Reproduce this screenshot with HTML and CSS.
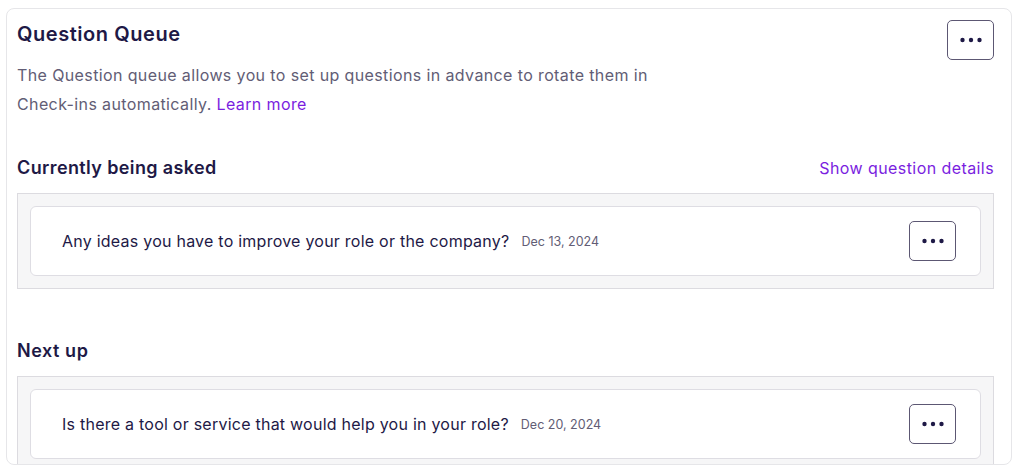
FILE: index.html
```html
<!DOCTYPE html>
<html lang="en">
<head>
<meta charset="utf-8">
<title>Question Queue</title>
<link rel="stylesheet" href="styles.css">
</head>
<body>
<div class="card">
  <div class="header">
    <h1 class="title">Question Queue</h1>
    <button class="more-btn" aria-label="More options">
      <svg width="22" height="6" viewBox="0 0 22 6"><circle cx="2.5" cy="3" r="2.2"/><circle cx="11" cy="3" r="2.2"/><circle cx="19.5" cy="3" r="2.2"/></svg>
    </button>
  </div>
  <p class="desc">The Question queue allows you to set up questions in advance to rotate them in<br>Check-ins automatically. <a class="link" href="#">Learn more</a></p>

  <div class="section-head first">
    <h2 class="section-title">Currently being asked</h2>
    <a class="link details" href="#">Show question details</a>
  </div>
  <div class="well">
    <div class="q-card">
      <span class="q-text">Any ideas you have to improve your role or the company?</span>
      <span class="q-date">Dec 13, 2024</span>
      <button class="more-btn" aria-label="More options">
        <svg width="22" height="6" viewBox="0 0 22 6"><circle cx="2.5" cy="3" r="2.2"/><circle cx="11" cy="3" r="2.2"/><circle cx="19.5" cy="3" r="2.2"/></svg>
      </button>
    </div>
  </div>

  <div class="section-head second">
    <h2 class="section-title short">Next up</h2>
  </div>
  <div class="well">
    <div class="q-card">
      <span class="q-text">Is there a tool or service that would help you in your role?</span>
      <span class="q-date">Dec 20, 2024</span>
      <button class="more-btn" aria-label="More options">
        <svg width="22" height="6" viewBox="0 0 22 6"><circle cx="2.5" cy="3" r="2.2"/><circle cx="11" cy="3" r="2.2"/><circle cx="19.5" cy="3" r="2.2"/></svg>
      </button>
    </div>
  </div>
</div>
</body>
</html>
```

FILE: styles.css
```css
* { box-sizing: border-box; }
html, body { margin: 0; padding: 0; background: #ffffff; }
body {
  font-family: "Inter", "Noto Sans", sans-serif;
  color: #1e1946;
  padding: 8px 0 0 6px;
}
.card {
  width: 1006px;
  height: 457px;
  border: 1px solid #e6e6e9;
  border-radius: 8px;
  padding: 11px 17px 0 10px;
  overflow: hidden;
  background: #fff;
}
.header {
  display: flex;
  justify-content: space-between;
  align-items: flex-start;
}
.title {
  margin: 0;
  font-size: 20px;
  line-height: 28px;
  font-weight: 600;
  letter-spacing: 0.55px;
  color: #1e1946;
}
.more-btn {
  width: 47px;
  height: 40px;
  border: 1px solid #5c5773;
  border-radius: 5px;
  background: #fff;
  padding: 0;
  display: flex;
  align-items: center;
  justify-content: center;
  flex: none;
  cursor: pointer;
}
.more-btn svg { fill: #1e1946; display: block; }
.desc {
  margin: 1px 0 0;
  font-size: 16px;
  line-height: 29px;
  letter-spacing: 0.38px;
  color: #625d75;
}
.link {
  color: #7a1ee0;
  text-decoration: none;
}
.section-head {
  display: flex;
  justify-content: space-between;
  align-items: center;
  height: 24px;
}
.section-head.first { margin-top: 37px; }
.section-head.second { margin-top: 50px; }
.section-title {
  margin: 0;
  font-size: 18px;
  line-height: 24px;
  font-weight: 600;
  letter-spacing: 0.38px;
  color: #1e1946;
}
.section-title.short { letter-spacing: 0.55px; }
.details { font-size: 16px; line-height: 24px; letter-spacing: 0.42px; }
.well {
  margin-top: 13px;
  background: #f6f6f7;
  border: 1px solid #dcdbe0;
  padding: 12px;
}
.second + .well { margin-top: 13px; }
.q-card {
  display: flex;
  align-items: center;
  height: 70px;
  background: #fff;
  border: 1px solid #dedde3;
  border-radius: 6px;
  padding: 0 24px 0 31px;
}
.q-text {
  font-size: 16px;
  letter-spacing: 0.24px;
  color: #1e1946;
}
.q-date {
  margin-left: 12px;
  font-size: 12.5px;
  color: #625d75;
}
.q-card .more-btn { margin-left: auto; }
```
